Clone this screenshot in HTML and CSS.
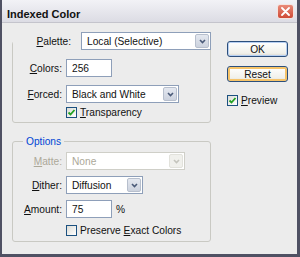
FILE: index.html
```html
<!DOCTYPE html>
<html lang="en">
<head>
    <meta charset="UTF-8">
    <meta name="viewport" content="width=device-width, initial-scale=1.0">
    <title>Indexed Color</title>
    <link rel="stylesheet" href="styles.css">
</head>
<body>

<div class="dialog">
    <div class="titlebar">
        <span class="title">Indexed Color</span>
        <span class="close">
            <svg width="9" height="9" viewBox="0 0 9 9"><path d="M1 1 L8 8 M8 1 L1 8" stroke="#fff" stroke-width="1.8" stroke-linecap="round"/></svg>
        </span>
    </div>

    <div class="content">
        <div class="main">
            <fieldset class="group">
                <legend class="legend-palette">
                    <span class="lbl lbl-palette"><u>P</u>alette:</span>
                    <span class="select sel-palette">Local (Selective)<span class="arrow"><svg width="7" height="5" viewBox="0 0 7 5"><path d="M1 1 L3.5 3.5 L6 1" fill="none" stroke="#4a5a78" stroke-width="1.6"/></svg></span></span>
                </legend>
                <div class="row row-colors">
                    <span class="lbl"><u>C</u>olors:</span>
                    <span class="input">256</span>
                </div>
                <div class="row row-forced">
                    <span class="lbl"><u>F</u>orced:</span>
                    <span class="select sel-forced">Black and White<span class="arrow"><svg width="7" height="5" viewBox="0 0 7 5"><path d="M1 1 L3.5 3.5 L6 1" fill="none" stroke="#4a5a78" stroke-width="1.6"/></svg></span></span>
                </div>
                <div class="check row-transp">
                    <span class="box"><svg width="9" height="9" viewBox="0 0 9 9"><path d="M1.5 4.5 L3.5 6.5 L7.5 2" fill="none" stroke="#21a121" stroke-width="1.8"/></svg></span>
                    <span><u>T</u>ransparency</span>
                </div>
            </fieldset>

            <fieldset class="group options">
                <legend class="legend-options">Options</legend>
                <div class="row row-matte">
                    <span class="lbl disabled"><u>M</u>atte:</span>
                    <span class="select sel-matte disabled">None<span class="arrow"><svg width="7" height="5" viewBox="0 0 7 5"><path d="M1 1 L3.5 3.5 L6 1" fill="none" stroke="#c4c4bc" stroke-width="1.6"/></svg></span></span>
                </div>
                <div class="row row-dither">
                    <span class="lbl"><u>D</u>ither:</span>
                    <span class="select sel-dither">Diffusion<span class="arrow"><svg width="7" height="5" viewBox="0 0 7 5"><path d="M1 1 L3.5 3.5 L6 1" fill="none" stroke="#4a5a78" stroke-width="1.6"/></svg></span></span>
                </div>
                <div class="row row-amount">
                    <span class="lbl"><u>A</u>mount:</span>
                    <span class="input">75</span>
                    <span class="pct">%</span>
                </div>
                <div class="check row-preserve">
                    <span class="box"></span>
                    <span>Preserve <u>E</u>xact Colors</span>
                </div>
            </fieldset>
        </div>

        <div class="side">
            <div class="btn btn-ok">OK</div>
            <div class="btn btn-reset">Reset</div>
            <div class="check row-preview">
                <span class="box"><svg width="9" height="9" viewBox="0 0 9 9"><path d="M1.5 4.5 L3.5 6.5 L7.5 2" fill="none" stroke="#21a121" stroke-width="1.8"/></svg></span>
                <span><u>P</u>review</span>
            </div>
        </div>
    </div>
</div>

</body>
</html>
```

FILE: styles.css
```css
* {
    box-sizing: border-box;
}
body {
    margin: 0;
    font-family: "Liberation Sans", Arial, sans-serif;
    font-size: 10.2px;
    color: #111;
    background: #ececec;
}
.dialog {
    width: 300px;
    height: 257px;
    background: #ececec;
    border: 3px solid #4f5163;
    border-top: 0;
    border-left-width: 2px;
    display: flex;
    flex-direction: column;
}
.titlebar {
    height: 23px;
    flex: none;
    display: flex;
    align-items: center;
    padding: 5px 3px 0 5px;
    background: linear-gradient(#f2f2f6, #dcdce4);
    border-bottom: 1px solid #c4c4cc;
}
.title {
    font-weight: bold;
    font-size: 11px;
}
.close {
    margin-left: auto;
    align-self: flex-start;
    margin-top: -1px;
    width: 17px;
    height: 15px;
    border: 1px solid #f4e4e0;
    border-radius: 3px;
    background: linear-gradient(#e98a78, #cf4a36);
    display: flex;
    align-items: center;
    justify-content: center;
}
.content {
    display: flex;
    padding: 9px 0 0 10px;
}
.main {
    width: 199px;
}
.group {
    margin: 0;
    padding: 0 0 3px 0;
    border: 1px solid #c9c9c3;
    border-radius: 3px;
    min-width: 0;
}
.legend-palette {
    display: flex;
    align-items: center;
    padding: 0 8px 0 9px;
}
.lbl-palette {
    width: 40px;
}
.sel-palette {
    margin-left: 6px;
    width: 130px;
}
.row {
    display: flex;
    align-items: center;
    height: 18px;
}
.lbl {
    width: 49px;
    text-align: right;
    margin-right: 4px;
    white-space: nowrap;
}
.lbl.disabled {
    color: #aca899;
}
.row-colors {
    margin-top: 9px;
}
.row-forced {
    margin-top: 8px;
}
.row-transp {
    margin-top: 3px;
}
.options {
    margin-top: 12px;
    padding-bottom: 4px;
}
.legend-options {
    margin-left: 10px;
    padding: 0 3px;
    line-height: 13px;
    color: #0046d5;
}
.row-matte {
    margin-top: 4px;
}
.row-dither,
.row-amount {
    margin-top: 6px;
}
.row-preserve {
    margin-top: 6px;
}
.input,
.select {
    height: 18px;
    border: 1px solid #8e9fb9;
    background: #fff;
    display: flex;
    align-items: center;
    padding-left: 5px;
    white-space: nowrap;
}
.input {
    width: 46px;
}
.select {
    padding-right: 1px;
}
.select.disabled {
    border-color: #cfcfc8;
    color: #aca899;
}
.arrow {
    margin-left: auto;
    width: 14px;
    height: 14px;
    border: 1px solid #b7bfcd;
    border-radius: 2px;
    background: linear-gradient(#e4e8f0, #ccd2de);
    display: flex;
    align-items: center;
    justify-content: center;
}
.disabled .arrow {
    border-color: #e2e2dc;
    background: #f0f0ec;
}
.sel-forced {
    width: 113px;
}
.sel-matte {
    width: 119px;
}
.sel-dither {
    width: 77px;
}
.pct {
    margin-left: 4px;
}
.check {
    display: flex;
    align-items: center;
    height: 13px;
    margin-left: 53px;
}
.box {
    width: 11px;
    height: 11px;
    margin-right: 3px;
    border: 1px solid #1c5180;
    background: linear-gradient(135deg, #dcdcd6, #fff);
    display: flex;
    align-items: center;
    justify-content: center;
}
.side {
    margin-left: 16px;
    padding-top: 9px;
    width: 61px;
}
.btn {
    height: 16px;
    border: 1px solid #2c4f7c;
    border-radius: 3px;
    background: linear-gradient(#ffffff, #f0f0ea 80%, #d8d4cc);
    display: flex;
    align-items: center;
    justify-content: center;
}
.btn-ok {
    box-shadow: inset 0 0 0 1px #b8d0f2;
}
.btn-reset {
    margin-top: 9px;
    box-shadow: inset 0 0 0 2px #f6c46a;
}
.row-preview {
    margin: 12px 0 0 0;
}
```
